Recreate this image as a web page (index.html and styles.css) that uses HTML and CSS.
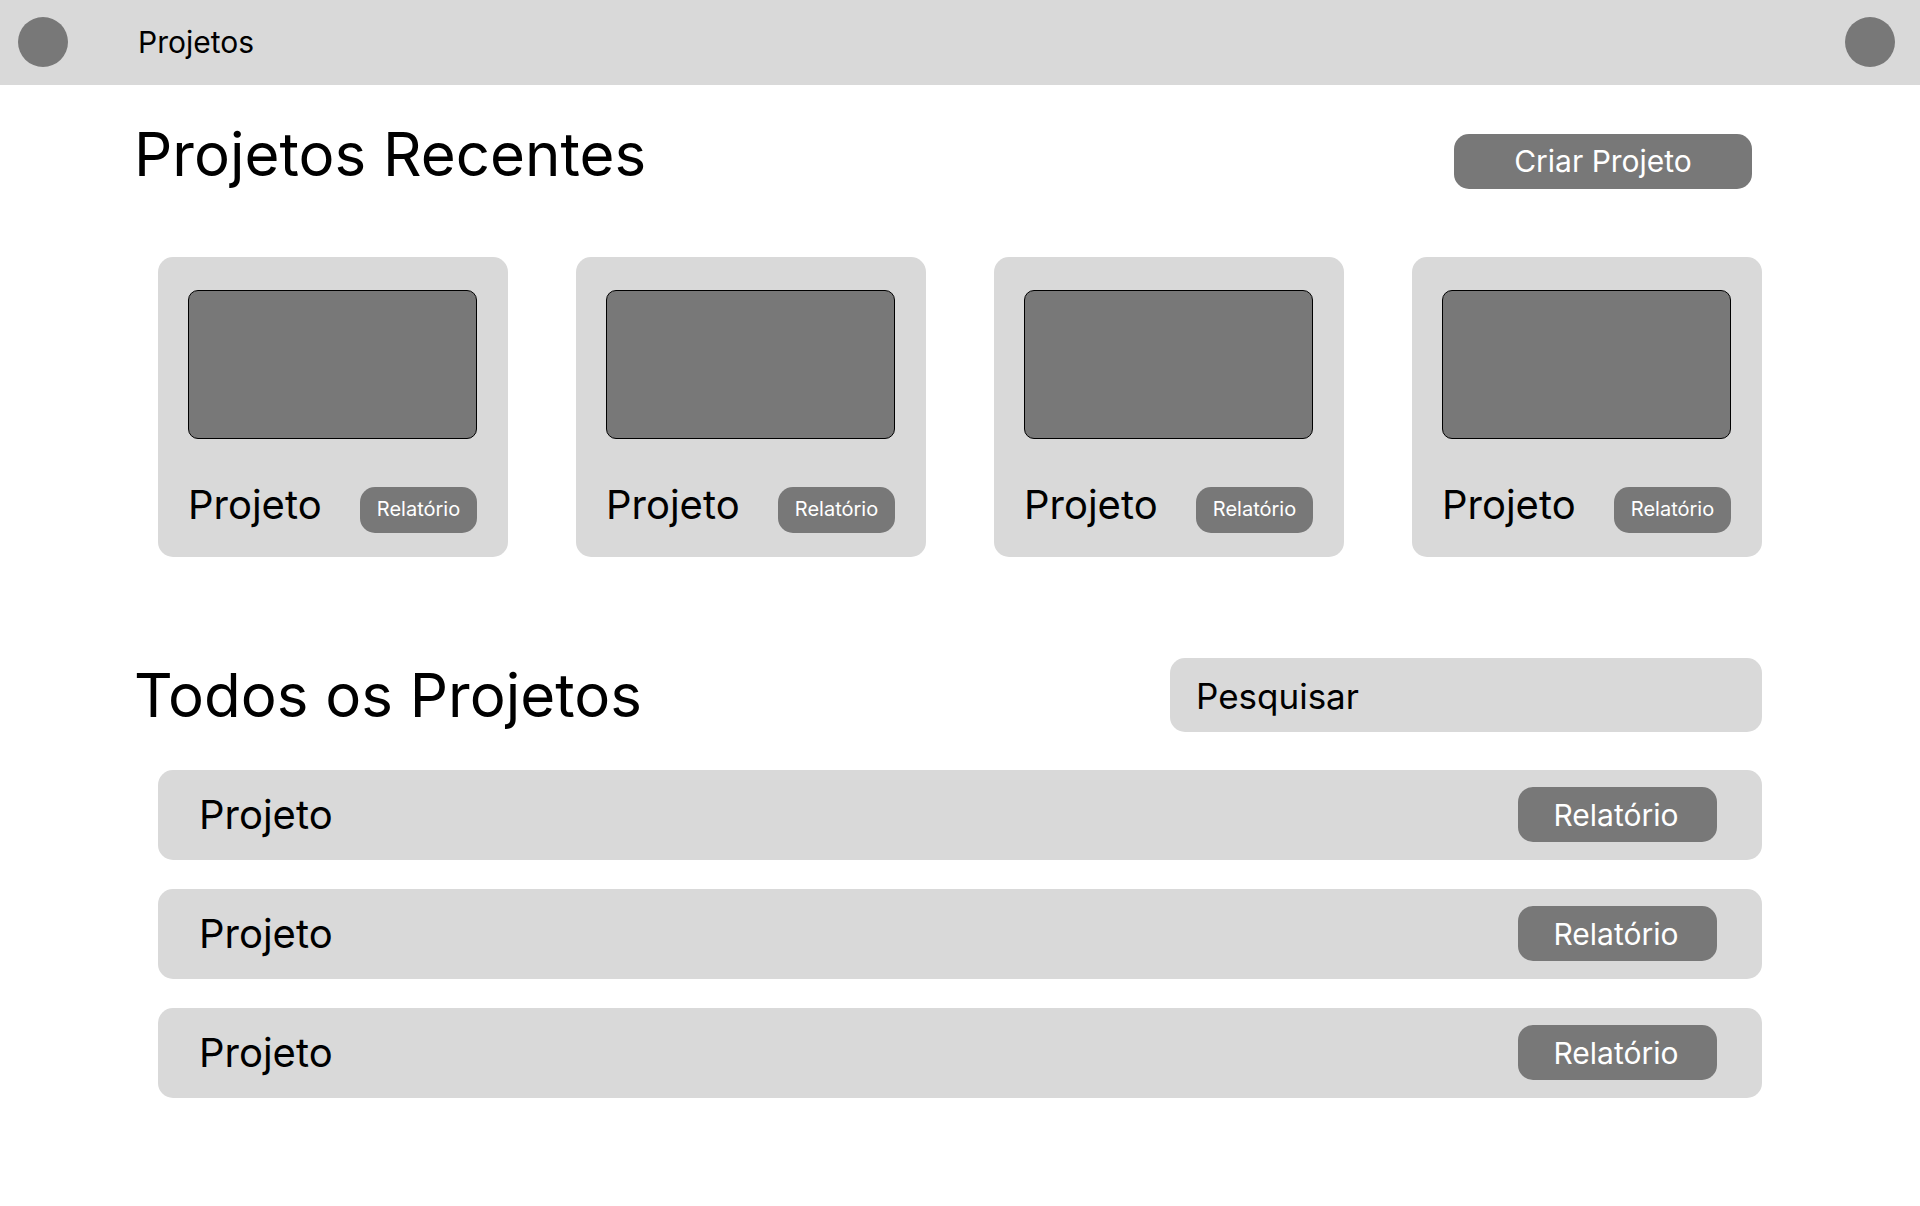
FILE: index.html
```html
<!DOCTYPE html>
<html lang="pt-BR">
<head>
  <meta charset="utf-8">
  <meta name="viewport" content="width=device-width, initial-scale=1">
  <title>Projetos</title>
  <link rel="stylesheet" href="styles.css">
</head>
<body>
  <header class="topbar">
    <a class="circle" href="#" aria-label="Início"></a>
    <nav class="topbar-nav"><a class="topbar-link" href="#">Projetos</a></nav>
    <button class="circle" type="button" aria-label="Perfil"></button>
  </header>

  <main class="page">
    <section>
      <div class="section-head section-head-recent">
        <h1 class="heading">Projetos Recentes</h1>
        <button class="button button-create" type="button">Criar Projeto</button>
      </div>
      <div class="cards">
        <article class="card">
          <div class="thumb"></div>
          <div class="card-foot">
            <h2 class="name">Projeto</h2>
            <button class="button button-small" type="button">Relatório</button>
          </div>
        </article>
        <article class="card">
          <div class="thumb"></div>
          <div class="card-foot">
            <h2 class="name">Projeto</h2>
            <button class="button button-small" type="button">Relatório</button>
          </div>
        </article>
        <article class="card">
          <div class="thumb"></div>
          <div class="card-foot">
            <h2 class="name">Projeto</h2>
            <button class="button button-small" type="button">Relatório</button>
          </div>
        </article>
        <article class="card">
          <div class="thumb"></div>
          <div class="card-foot">
            <h2 class="name">Projeto</h2>
            <button class="button button-small" type="button">Relatório</button>
          </div>
        </article>
      </div>
    </section>

    <section class="all">
      <div class="section-head">
        <h1 class="heading">Todos os Projetos</h1>
        <input class="search" type="search" placeholder="Pesquisar" aria-label="Pesquisar">
      </div>
      <ul class="list">
        <li class="row">
          <span class="name">Projeto</span>
          <button class="button button-row" type="button">Relatório</button>
        </li>
        <li class="row">
          <span class="name">Projeto</span>
          <button class="button button-row" type="button">Relatório</button>
        </li>
        <li class="row">
          <span class="name">Projeto</span>
          <button class="button button-row" type="button">Relatório</button>
        </li>
      </ul>
    </section>
  </main>
</body>
</html>
```

FILE: styles.css
```css
:root {
  --light: #d9d9d9;
  --dark: #787878;
  --radius: 15px;
}

* {
  box-sizing: border-box;
}

body {
  margin: 0;
  background: #fff;
  color: #000;
  font-family: Inter, "Liberation Sans", sans-serif;
}

.topbar {
  display: flex;
  align-items: center;
  padding: 17px 25px 18px 18px;
  background: var(--light);
}

.circle {
  flex: none;
  width: 50px;
  height: 50px;
  padding: 0;
  border: 0;
  border-radius: 50%;
  background: var(--dark);
}

.topbar-nav {
  flex: 1;
  padding-left: 70px;
}

.topbar-link {
  color: inherit;
  font-size: 30px;
  line-height: 36px;
  text-decoration: none;
}

.page {
  padding: 34px 158px 108px 134px;
}

.section-head {
  display: flex;
  align-items: center;
  justify-content: space-between;
  gap: 24px;
}

.section-head-recent {
  align-items: flex-end;
  padding-right: 10px;
}

.heading {
  margin: 0;
  font-size: 60px;
  font-weight: 400;
  line-height: 70px;
}

.name {
  margin: 0;
  font-size: 40px;
  font-weight: 400;
  line-height: 56px;
}

.button {
  flex: none;
  padding: 0 0 2px;
  border: 0;
  border-radius: var(--radius);
  background: var(--dark);
  color: #fff;
  font-family: inherit;
  font-size: 30px;
  line-height: 36px;
}

.button-create {
  width: 298px;
  height: 55px;
}

.button-row {
  width: 199px;
  height: 55px;
  padding: 0 3px 0 0;
}

.button-small {
  width: 117px;
  height: 46px;
  font-size: 20px;
  line-height: 24px;
}

.cards {
  display: grid;
  grid-template-columns: repeat(4, 1fr);
  gap: 68px;
  margin-top: 68px;
  padding-left: 24px;
}

.card {
  padding: 33px 31px 24px 30px;
  border-radius: var(--radius);
  background: var(--light);
}

.thumb {
  height: 149px;
  border: 1px solid #000;
  border-radius: 10px;
  background: var(--dark);
}

.card-foot {
  display: flex;
  align-items: flex-end;
  justify-content: space-between;
  margin-top: 38px;
}

.all {
  margin-top: 101px;
}

.search {
  width: 592px;
  height: 74px;
  padding: 2px 26px 0;
  border: 0;
  border-radius: var(--radius);
  background: var(--light);
  color: #000;
  font-family: inherit;
  font-size: 35px;
  appearance: none;
}

.search::placeholder {
  color: #000;
  opacity: 1;
}

.list {
  display: grid;
  gap: 29px;
  margin: 38px 0 0;
  padding: 0 0 0 24px;
  list-style: none;
}

.row {
  display: flex;
  align-items: flex-start;
  justify-content: space-between;
  padding: 17px 45px 17px 41px;
  border-radius: var(--radius);
  background: var(--light);
}
```
